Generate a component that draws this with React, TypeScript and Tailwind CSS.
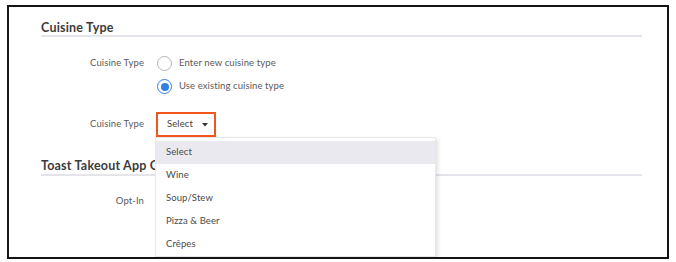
import React from "react";

const font = { fontFamily: "Lato, 'Open Sans', Arial, sans-serif" };

const options = ["Select", "Wine", "Soup/Stew", "Pizza & Beer", "Crêpes"];

function Radio({ checked }: { checked?: boolean }) {
  return checked ? (
    <span className="flex h-[15px] w-[15px] items-center justify-center rounded-full border-[1.5px] border-[#2f7fe0]">
      <span className="h-[8px] w-[8px] rounded-full bg-[#2f7fe0]" />
    </span>
  ) : (
    <span className="h-[15px] w-[15px] rounded-full border-[1.5px] border-[#b4b4b4]" />
  );
}

function Label({ children }: { children?: React.ReactNode }) {
  return <div className="w-[103px] shrink-0 text-right">{children}</div>;
}

export default function App() {
  return (
    <div className="h-[262px] w-[676px] bg-white pl-[7px] pt-[5px]" style={font}>
      <div className="relative h-[254px] w-[662px] overflow-hidden border-2 border-[#151515] pl-[32px] pr-[25px] text-[9.5px] tracking-[0.1px] text-[#5a5a5a]">
        <div className="pt-[13px]">
          <h2 className="border-b-2 border-[#e4e4ea] text-[12.5px] font-bold leading-[15px] tracking-[0.2px] text-[#3c3c3c]">
            Cuisine Type
          </h2>
        </div>

        <div className="mt-[15px] flex h-[23px] items-center">
          <Label>Cuisine Type</Label>
          <div className="ml-[13px] flex items-center gap-[7px]">
            <Radio />
            <span>Enter new cuisine type</span>
          </div>
        </div>
        <div className="flex h-[23px] items-center">
          <Label />
          <div className="ml-[13px] flex items-center gap-[7px]">
            <Radio checked />
            <span>Use existing cuisine type</span>
          </div>
        </div>

        <div className="mt-[14px] flex h-[25px] items-center">
          <Label>Cuisine Type</Label>
          <div className="ml-[12px] flex h-[25px] w-[60px] items-center border-2 border-[#f2561d] pl-[9px] text-[#444]">
            <span>Select</span>
            <svg className="ml-[9px]" width="6" height="4" viewBox="0 0 6 4">
              <path d="M0 0h6L3 3.5z" fill="#333" />
            </svg>
          </div>
        </div>

        <div className="mt-[20px]">
          <h2 className="border-b-2 border-[#e4e4ea] text-[12.5px] font-bold leading-[17px] tracking-[0.2px] text-[#3c3c3c]">
            Toast Takeout App Ordering
          </h2>
        </div>

        <div className="mt-[14px] flex h-[23px] items-center">
          <Label>Opt-In</Label>
        </div>

        <div className="absolute left-[146px] top-[130px] w-[281px] border border-[#e8e8ec] bg-white pt-[3px] shadow-[2px_2px_4px_rgba(0,0,0,0.12)]">
          {options.map((o, i) => (
            <div
              key={o}
              className={`flex h-[23px] items-center pl-[10px] text-[#4a4a4a] ${i === 0 ? "bg-[#e9e9ef]" : ""}`}
            >
              {o}
            </div>
          ))}
        </div>
      </div>
    </div>
  );
}
